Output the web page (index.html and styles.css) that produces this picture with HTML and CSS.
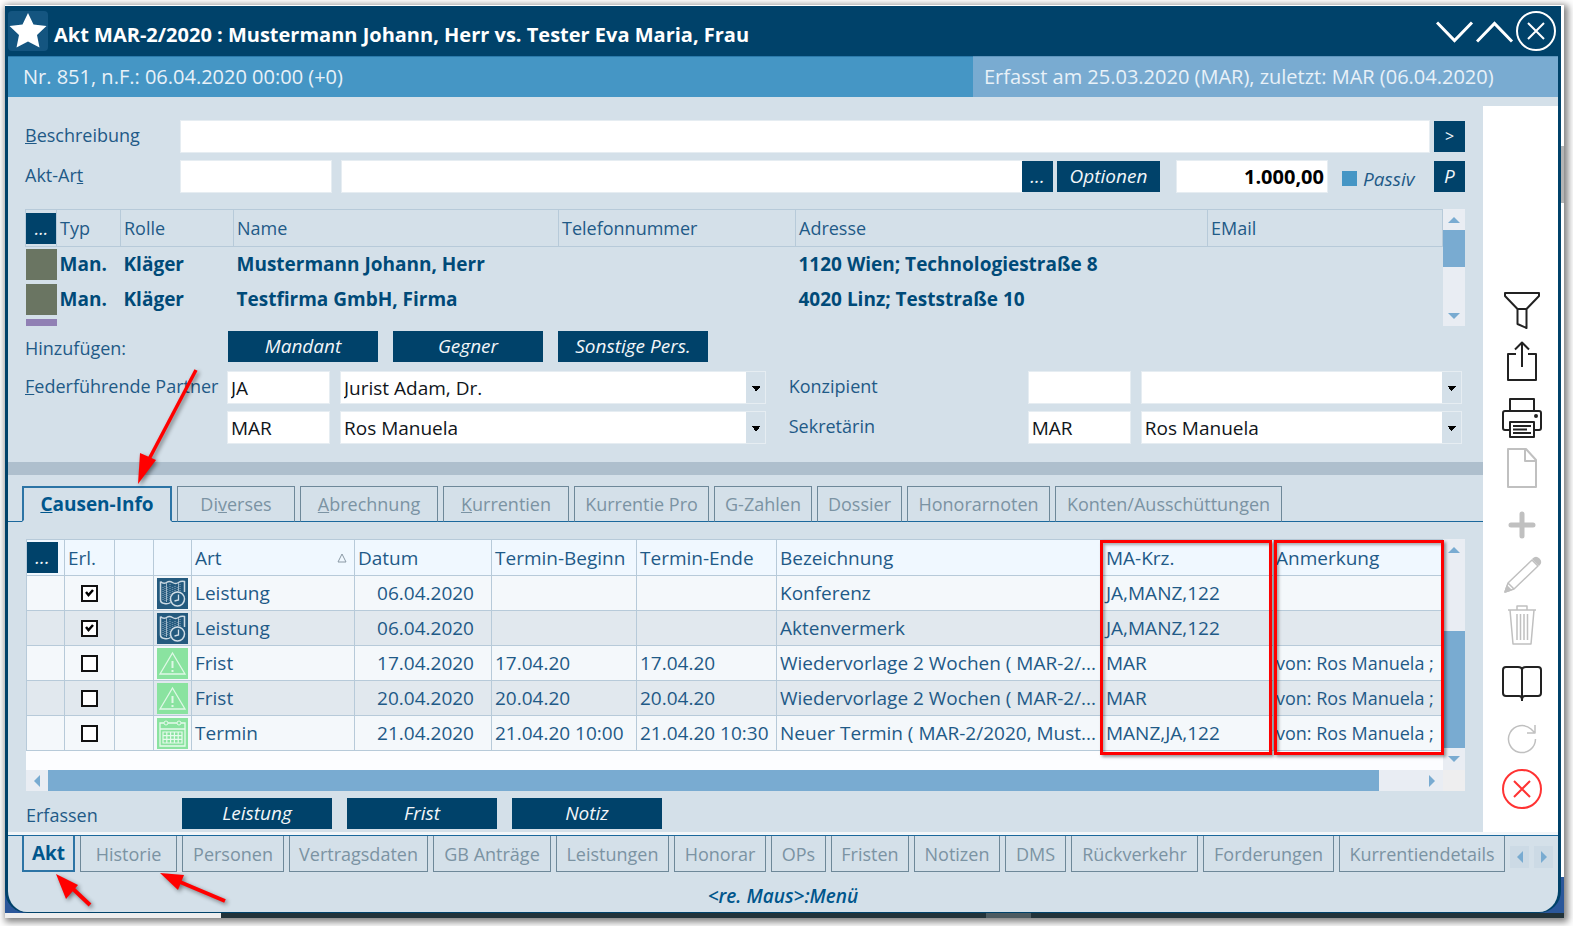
FILE: index.html
```html
<!DOCTYPE html>
<html lang="de">
<head>
<meta charset="utf-8">
<title>Akt MAR-2/2020</title>
<link rel="stylesheet" href="styles.css">
</head>
<body>
<svg class="sprite" width="0" height="0" aria-hidden="true">
  <symbol id="map" viewBox="0 0 31 31">
    <rect width="31" height="31" fill="#245a7e"/>
    <path d="M8 8v16M13 6v18M18 8v8M23 6v8M6 9v13M10.500 9v14M15.500 9v14M20.500 9v5" stroke="#6d90aa" stroke-width="1.500" stroke-dasharray="1 1"/>
    <path d="M3.500 3.500q3 3 6 1t6 0 6 0 6-1V14M3.500 3.500V22q0 3 4 3.500 3 1 6-1" fill="none" stroke="#cbd9e3" stroke-width="1.500"/>
    <path d="M9.500 5v19M21.500 5v8" stroke="#9db6c8" stroke-width="1"/>
    <circle cx="20.500" cy="21" r="7" fill="#245a7e" stroke="#d2dee7" stroke-width="1.500"/>
    <path d="M21.500 16.500v5.500l-4 1" fill="none" stroke="#d2dee7" stroke-width="1.300"/>
  </symbol>
  <symbol id="warn" viewBox="0 0 31 31">
    <rect width="31" height="31" fill="#8ae3a0"/>
    <path d="M15.500 5L28 26H3z" fill="none" stroke="#dff8e6" stroke-width="1.300"/>
    <path d="M15.500 13v7M15.500 22v2" stroke="#dff8e6" stroke-width="2"/>
  </symbol>
  <symbol id="cal" viewBox="0 0 31 31">
    <rect width="31" height="31" fill="#8ae3a0"/>
    <path d="M3 5h25v23H3zM3 11h25" fill="none" stroke="#e6faec" stroke-width="1.300"/>
    <circle cx="9" cy="5" r="2" fill="#8ae3a0" stroke="#e6faec"/><circle cx="22" cy="5" r="2" fill="#8ae3a0" stroke="#e6faec"/>
    <path d="M6 14h19v11H6zM6 17.700h19M6 21.400h19M9.800 14v11M13.600 14v11M17.400 14v11M21.200 14v11" fill="none" stroke="#e6faec" stroke-width="1.200"/>
  </symbol>
</svg>
<div class="screen">
  <div class="backdrop">
  <div class="window">
    <header class="titlebar">
      <svg class="star" viewBox="0 0 40 40" aria-hidden="true"><rect width="40" height="40" rx="4" fill="#145580"/><path d="M20 2l5.500 11.500L38.500 15l-9.500 9 2.500 12.500L20 30.500 8.500 36.500 11 24 1.500 15l13-1.500z" fill="#fff"/></svg>
      <h1>Akt MAR-2/2020 : Mustermann Johann, Herr vs. Tester Eva Maria, Frau</h1>
      <button class="wbtn" aria-label="Weiter"><svg width="40" height="40" viewBox="0 0 40 40"><path d="M1 11.500L18.500 29.500 36 11.500" fill="none" stroke="#fff" stroke-width="3"/></svg></button>
      <button class="wbtn" aria-label="Zurück"><svg width="40" height="40" viewBox="0 0 40 40"><path d="M1 30.500L18.500 12.500 36 30.500" fill="none" stroke="#fff" stroke-width="3"/></svg></button>
      <button class="wbtn" aria-label="Schließen"><svg width="40" height="40" viewBox="0 0 40 40"><circle cx="20" cy="20" r="19" fill="none" stroke="#fff" stroke-width="2"/><path d="M12 12l16 16M28 12L12 28" stroke="#fff" stroke-width="2"/></svg></button>
    </header>
    <div class="subbar"><div class="sub-left">Nr. 851, n.F.: 06.04.2020 00:00 (+0)</div><div class="sub-right">Erfasst am 25.03.2020 (MAR), zuletzt: MAR (06.04.2020)</div></div>
    <div class="body">
      <main class="main">
        <div class="upper">
          <div class="row">
            <label class="lab" for="beschr"><u>B</u>eschreibung</label>
            <input class="field grow" id="beschr" type="text">
            <button class="btn sq up">&gt;</button>
          </div>
          <div class="row second">
            <label class="lab" for="art">Akt-Ar<u>t</u></label>
            <input class="field kind" id="art" type="text">
            <input class="field grow" type="text" aria-label="Akt-Art Text">
            <button class="btn sq">...</button>
            <button class="btn opt">Optionen</button>
            <input class="field amount" type="text" value="1.000,00" aria-label="Betrag">
            <label class="passive"><input type="checkbox">Passiv</label>
            <button class="btn sq">P</button>
          </div>
          <div class="gridbox persons">
            <table>
              <colgroup><col class="p1"><col class="p2"><col class="p3"><col class="p4"><col class="p5"><col><col class="p7"></colgroup>
              <thead><tr><th><button class="btn sq">...</button></th><th>Typ</th><th>Rolle</th><th>Name</th><th>Telefonnummer</th><th>Adresse</th><th>EMail</th></tr></thead>
              <tbody>
                <tr><td><i class="swatch"></i></td><td>Man.</td><td>Kläger</td><td>Mustermann Johann, Herr</td><td></td><td>1120 Wien; Technologiestraße 8</td><td></td></tr>
                <tr><td><i class="swatch"></i></td><td>Man.</td><td>Kläger</td><td>Testfirma GmbH, Firma</td><td></td><td>4020 Linz; Teststraße 10</td><td></td></tr>
                <tr class="cut"><td><i class="swatch violet"></i></td><td></td><td></td><td></td><td></td><td></td><td></td></tr>
              </tbody>
            </table>
            <div class="vscroll"><i class="arr up-arr"></i><i class="thumb"></i><i class="arr down-arr"></i></div>
          </div>
          <div class="row adders">
            <span class="lab wide">Hinzufügen:</span>
            <button class="btn act">Mandant</button><button class="btn act">Gegner</button><button class="btn act">Sonstige Pers.</button>
          </div>
          <div class="row staff">
            <label class="lab wide" for="fp"><u>F</u>ederführende Partner</label>
            <input class="field code" id="fp" type="text" value="JA">
            <select class="field pick4" aria-label="Federführender Partner"><option>Jurist Adam, Dr.</option></select>
            <label class="lab mid" for="kz">Konzipient</label>
            <input class="field code" id="kz" type="text">
            <select class="field pick3" aria-label="Konzipient Name"><option></option></select>
          </div>
          <div class="row staff next">
            <span class="lab wide"></span>
            <input class="field code" type="text" value="MAR" aria-label="Zweiter Partner Kürzel">
            <select class="field pick4" aria-label="Zweiter Partner"><option>Ros Manuela</option></select>
            <label class="lab mid" for="sk">Sekretärin</label>
            <input class="field code" id="sk" type="text" value="MAR">
            <select class="field pick3" aria-label="Sekretärin Name"><option>Ros Manuela</option></select>
          </div>
        </div>
        <div class="splitter"></div>
        <nav class="tabs top">
          <button class="tab on"><u>C</u>ausen-Info</button><button class="tab">Di<u>v</u>erses</button><button class="tab"><u>A</u>brechnung</button><button class="tab"><u>K</u>urrentien</button><button class="tab">Kurrentie Pro</button><button class="tab">G-Zahlen</button><button class="tab">Dossier</button><button class="tab">Honorarnoten</button><button class="tab">Konten/Ausschüttungen</button>
        </nav>
        <div class="lower">
          <div class="gridbox events">
            <div class="sheet">
            <table>
              <colgroup><col class="e1"><col class="e2"><col class="e3"><col class="e4"><col class="e5"><col class="e6"><col class="e7"><col class="e8"><col><col class="e10"><col class="e11"></colgroup>
              <thead><tr><th class="nopad"><button class="btn sq">...</button></th><th>Erl.</th><th></th><th></th><th><span class="sort">Art<svg width="10" height="10" viewBox="0 0 10 10"><path d="M5 1l4 8H1z" fill="none" stroke="#8a99a5"/></svg></span></th><th>Datum</th><th>Termin-Beginn</th><th>Termin-Ende</th><th>Bezeichnung</th><th class="kz">MA-Krz.</th><th class="note">Anmerkung</th></tr></thead>
              <tbody>
                <tr><td></td><td class="chk"><input type="checkbox" checked aria-label="Erledigt"></td><td></td><td class="ico"><svg><use href="#map"/></svg></td><td>Leistung</td><td class="dat">06.04.2020</td><td></td><td></td><td>Konferenz</td><td class="kz">JA,MANZ,122</td><td class="note"></td></tr>
                <tr><td></td><td class="chk"><input type="checkbox" checked aria-label="Erledigt"></td><td></td><td class="ico"><svg><use href="#map"/></svg></td><td>Leistung</td><td class="dat">06.04.2020</td><td></td><td></td><td>Aktenvermerk</td><td class="kz">JA,MANZ,122</td><td class="note"></td></tr>
                <tr><td></td><td class="chk"><input type="checkbox" aria-label="Erledigt"></td><td></td><td class="ico"><svg><use href="#warn"/></svg></td><td>Frist</td><td class="dat">17.04.2020</td><td>17.04.20</td><td>17.04.20</td><td>Wiedervorlage 2 Wochen ( MAR-2/...</td><td class="kz">MAR</td><td class="note">von: Ros Manuela ;</td></tr>
                <tr><td></td><td class="chk"><input type="checkbox" aria-label="Erledigt"></td><td></td><td class="ico"><svg><use href="#warn"/></svg></td><td>Frist</td><td class="dat">20.04.2020</td><td>20.04.20</td><td>20.04.20</td><td>Wiedervorlage 2 Wochen ( MAR-2/...</td><td class="kz">MAR</td><td class="note">von: Ros Manuela ;</td></tr>
                <tr><td></td><td class="chk"><input type="checkbox" aria-label="Erledigt"></td><td></td><td class="ico"><svg><use href="#cal"/></svg></td><td>Termin</td><td class="dat">21.04.2020</td><td>21.04.20 10:00</td><td>21.04.20 10:30</td><td>Neuer Termin ( MAR-2/2020, Must...</td><td class="kz">MANZ,JA,122</td><td class="note">von: Ros Manuela ;</td></tr>
              </tbody>
            </table>
            <div class="mark mark-a"></div><div class="mark mark-b"></div>
            </div>
            <div class="vscroll"><i class="arr up-arr"></i><i class="thumb"></i><i class="arr down-arr"></i></div>
            <div class="hscroll"><i class="arr left-arr"></i><i class="bar"></i><i class="arr right-arr"></i></div>
            <div class="corner"></div>
          </div>
          <div class="row capture">
            <span class="lab">Erfassen</span>
            <button class="btn act">Leistung</button><button class="btn act">Frist</button><button class="btn act">Notiz</button>
          </div>
        </div>
      </main>
      <aside class="tools">
        <div class="group">
          <button aria-label="Filter"><svg viewBox="0 0 40 40"><path d="M3 2h34v3L24.500 18h-9L3 5zM15.500 18v15l9 4V18"/></svg></button>
          <button aria-label="Teilen"><svg viewBox="0 0 40 40"><path d="M14 13H6v26h28V13h-8M20 26V2M13 8.500l7-7 7 7"/></svg></button>
        </div>
        <div class="group">
          <button aria-label="Drucken"><svg viewBox="0 0 40 40"><path d="M8 13V1h24v12M8 32H3q-2 0-2-2V15q0-2 2-2h34q2 0 2 2v15q0 2-2 2h-5M8 24h24v15H8zM11 28h18M11 31.500h14M11 35h18"/><circle cx="34" cy="18" r="1"/></svg></button>
          <button class="off" aria-label="Dokument"><svg viewBox="0 0 40 40"><path d="M6 1h18l10 11v27H6zM23 1v12h11"/></svg></button>
        </div>
        <div class="group">
          <button class="off" aria-label="Neu"><svg viewBox="0 0 40 40"><path class="fat" d="M20 9v22M9 20h22"/></svg></button>
          <button class="off thin" aria-label="Bearbeiten"><svg viewBox="0 0 40 40"><path d="M3 37l3-9L30 5l6 6L12 34zM6 28l6 6"/><path class="solid" d="M3 37l2-6 4 4zM31 4q3-3 6 0t0 6z"/></svg></button>
          <button class="off thin" aria-label="Löschen"><svg viewBox="0 0 40 40"><path d="M6 5h28M15 5V1h10v4M8 5l3 34h18l3-34M15 9v26M18.500 9v26M22 9v26M25.500 9v26"/></svg></button>
        </div>
        <div class="group">
          <button aria-label="Buch"><svg viewBox="0 0 40 40"><path d="M20 6v33M20 8q0-3-4-3H4Q1 5 1 8v23q0 3 3 3h13q3 0 3 4 0-4 3-4h13q3 0 3-3V8q0-3-3-3H24q-4 0-4 3" /></svg></button>
        </div>
        <div class="group">
          <button class="off thin" aria-label="Aktualisieren"><svg viewBox="0 0 40 40"><path d="M33.500 20A13.500 13.500 0 1 1 29 10l3 3M33 6v8h-8"/></svg></button>
          <button class="red" aria-label="Abbrechen"><svg viewBox="0 0 40 40"><circle cx="20" cy="20" r="19"/><path d="M12 12l16 16M28 12L12 28"/></svg></button>
        </div>
      </aside>
    </div>
    <nav class="tabs bottom">
      <button class="tab on">Akt</button><button class="tab">Historie</button><button class="tab">Personen</button><button class="tab">Vertragsdaten</button><button class="tab">GB Anträge</button><button class="tab">Leistungen</button><button class="tab">Honorar</button><button class="tab">OPs</button><button class="tab">Fristen</button><button class="tab">Notizen</button><button class="tab">DMS</button><button class="tab">Rückverkehr</button><button class="tab">Forderungen</button><button class="tab">Kurrentiendetails</button>
      <button class="pager" aria-label="Tabs zurück"><i class="arr left-arr"></i></button><button class="pager" aria-label="Tabs vor"><i class="arr right-arr"></i></button>
    </nav>
    <footer class="status">&lt;re. Maus&gt;:Menü</footer>
  </div>
  </div>
  <div class="taskbar"><i class="light"></i><i class="dark"></i><i class="mid-part"></i><i class="dark rest"></i></div>
  <svg class="pointers" width="240" height="140" viewBox="0 0 240 140" aria-hidden="true">
    <g class="ptr"><path d="M196 11L147 104" stroke="#f00" stroke-width="3.500"/><path d="M138 125l2-31 16 7z" fill="#f00"/></g>
  </svg>
  <svg class="pointers low" width="240" height="50" viewBox="0 0 240 50" aria-hidden="true">
    <g class="ptr"><path d="M90 37L71 19" stroke="#f00" stroke-width="4"/><path d="M56 6l22 11-12 14z" fill="#f00"/></g>
    <g class="ptr"><path d="M225 33L180 14" stroke="#f00" stroke-width="4"/><path d="M160 5l24 2-6 15z" fill="#f00"/></g>
  </svg>
</div>
</body>
</html>
```

FILE: styles.css
```css
* { box-sizing: border-box; }
body { margin: 0; padding: 5px 9px 9px 5px; background: #fff; font: 19px/26px "Open Sans", "Noto Sans", sans-serif; color: #1f5a87; }
button, input, select { font: inherit; margin: 0; padding: 0; border: 0; border-radius: 0; color: inherit; background: none; }
.sprite { position: absolute; }

.screen { position: relative; box-shadow: 2px 2px 7px 2px rgba(0,0,0,.5); }
.backdrop { padding: 1px 3px 0 0; background: linear-gradient(#fff 0 141px, #b5b5b5 141px 198px, #fff 198px 872px, #2b579a 872px); }
.window { background: #d4e0e9; border: solid #00426a; border-width: 0 3px 1px; border-radius: 0 0 22px 22px; overflow: hidden; }
.taskbar { display: flex; height: 5px; }
.light { width: 216px; background: #eee; }
.dark { flex: 764; background: #22333a; }
.mid-part { width: 45px; background: #4d5b61; }
.rest { flex: 533; }

.titlebar { display: flex; align-items: center; height: 50px; background: #00426a; color: #fff; padding-right: 2px; }
.star { width: 40px; height: 40px; flex: none; }
.titlebar h1 { flex: 1; margin: 8px 0 0 6px; font-size: 20px; font-weight: 700; }
.wbtn { width: 40px; height: 40px; }
.wbtn svg { display: block; }
.subbar { display: flex; height: 41px; line-height: 39px; color: #e8f1f8; font-size: 20px; }
.sub-left { flex: 1; background: #4596c5; padding-left: 15px; border-top: 1px solid #2b7aab; }
.sub-right { width: 585px; background: #79abd1; padding-left: 11px; border-top: 1px solid #5f95bd; }

.body { display: flex; border-bottom: 3px solid #f2f6f9; }
.main { flex: 1; min-width: 0; }
.upper { padding: 24px 18px 19px 17px; }
.row { display: flex; align-items: center; }
.lab { flex: none; width: 156px; margin-top: -3px; font-size: 18px; }
.lab.wide { width: 203px; white-space: nowrap; }
.lab.mid { width: 240px; margin-left: 24px; }
.field { height: 31px; background: #fff; color: #10151a; outline: 1px solid #e6edf2; padding: 0 3px; min-width: 0; }
.grow { flex: 1; }
.btn { height: 31px; background: #00426a; color: #f2f6f9; font-style: italic; flex: none; text-align: center; line-height: 29px; }
.sq { width: 31px; }
.row > .sq.up { margin-left: 5px; font-size: 16px; font-style: normal; }
.second { margin-top: 9px; }
.kind { width: 150px; margin-right: 11px; }
.opt { width: 103px; margin: 0 17px 0 4px; }
.amount { width: 150px; text-align: right; font-size: 20px; font-weight: 700; color: #000; }
.passive { display: flex; align-items: center; gap: 6px; margin: 4px 12px 0 15px; width: 80px; font-style: italic; line-height: 24px; }
.passive input { appearance: none; width: 15px; height: 15px; background: #4596c5; }

.gridbox { display: grid; grid-template-columns: minmax(0, 1fr) 22px; }
table { width: 100%; table-layout: fixed; border-collapse: collapse; }
th, td { padding: 0 0 0 3px; text-align: left; font-weight: 400; white-space: nowrap; overflow: hidden; border: 1px solid #b7cad9; }
th { height: 37px; }
th .btn, th svg { display: block; }
.persons { margin-top: 17px; height: 117px; overflow: hidden; }
.persons th { font-size: 18px; }
.persons td { border: 0; font-weight: 700; color: #004a78; height: 35px; }
.persons th:first-child, .persons td:first-child { padding: 0; }
.persons .cut td { height: 10px; vertical-align: top; }
.p1 { width: 31px; } .p2 { width: 64px; } .p3 { width: 113px; } .p4 { width: 325px; } .p5 { width: 237px; } .p7 { width: 235px; }
.swatch { display: block; height: 31px; background: #6a7562; }
.violet { height: 7px; margin-top: 2px; background: #9080b4; }
.vscroll { display: flex; flex-direction: column; align-items: center; background: #e9edf3; padding: 8px 0; }
.vscroll .thumb { width: 100%; background: #79abd1; }
.persons .thumb { height: 37px; margin: 7px 0 auto; }
.arr { flex: none; border: 6px solid transparent; width: 0; height: 0; }
.up-arr { border-top: 0; border-bottom-color: #79abd1; }
.down-arr { border-bottom: 0; border-top-color: #79abd1; }
.left-arr { border-left: 0; border-right-color: #79abd1; }
.right-arr { border-right: 0; border-left-color: #79abd1; }

.adders, .capture { gap: 15px; }
.adders { margin-top: 5px; }
.adders .lab.wide { width: 188px; margin-top: 2px; }
.act { width: 150px; }
.staff { margin-top: 10px; }
.staff.next { margin-top: 9px; }
.code { width: 101px; margin-right: 12px; }
select.field { appearance: none; background: conic-gradient(from 315deg at 50% 100%, #000 90deg, #d4e0e9 0) right 5px top 14px / 9px 5px no-repeat, linear-gradient(90deg, #fff calc(100% - 19px), #d4e0e9 0); }
select.field { background: linear-gradient(45deg, transparent 50%, #000 0) right 9px top 14px / 5px 5px no-repeat, linear-gradient(-45deg, transparent 50%, #000 0) right 4px top 14px / 5px 5px no-repeat, linear-gradient(90deg, #fff calc(100% - 19px), #d4e0e9 0); }
.pick4 { flex: 4 1 0; } .pick3 { flex: 3 1 0; margin-right: 4px; }
.splitter { height: 13px; background: #aebfcd; }

.tabs { display: grid; gap: 5px; }
.tab { height: 36px; border: 1px solid #6e8899; color: #7b93a3; white-space: nowrap; line-height: 32px; font-size: 18px; }
.tab.on { border: 2px solid #2c74a5; color: #00568c; font-size: 19px; font-weight: 700; }
.tabs.top { margin-top: 11px; padding-left: 14px; grid-template-columns: 150px 118px 138px 126px 135px 98px 85px 143px 227px; background: linear-gradient(#1b689c, #1b689c) left bottom / 100% 1px no-repeat; }
.top .tab { border-bottom-color: #1b689c; }
.top .tab.on { border-bottom-color: #d4e0e9; }
.lower { padding: 17px 18px 3px; }
.sheet { position: relative; background: #fcfdff; height: 231px; }
.events tr { background: #f4f8fb; }
.events thead tr { background: #f0f8ff; }
.events tbody tr:nth-child(even) { background: #e1e8ee; }
.events th { height: 36px; }
.events td { height: 35px; }
.events th.nopad { padding: 0; }
.events .chk { text-align: center; padding: 0; }
.chk input { appearance: none; display: block; width: 17px; height: 17px; margin: 0 auto; background: #fff; border: 2px solid #111; }
.chk input:checked { background: #fff url("data:image/svg+xml,%3Csvg xmlns='http://www.w3.org/2000/svg' viewBox='0 0 13 13'%3E%3Cpath d='M3 5l2.500 3L10 3' fill='none' stroke='%23000' stroke-width='2.500'/%3E%3C/svg%3E"); }
.ico svg { display: block; width: 31px; height: 31px; }
.events td.dat { text-align: right; padding-right: 17px; }
.sort { display: flex; align-items: center; justify-content: space-between; padding-right: 7px; }
.e1 { width: 38px; } .e2 { width: 50px; } .e3 { width: 39px; } .e4 { width: 38px; } .e5 { width: 163px; } .e6 { width: 137px; } .e7 { width: 145px; } .e8 { width: 140px; } .e10 { width: 172px; } .e11 { width: 169px; }
.events .kz { padding-left: 4px; }
.events .note { padding-left: 2px; }
.events td.note { font-size: 18px; }
.mark { position: absolute; top: 1px; height: 215px; border: 3px solid #f00; box-shadow: 2px 2px 3px rgba(0,0,0,.4), inset 2px 2px 3px rgba(0,0,0,.3); }
.mark-a { right: 171px; width: 172px; }
.mark-b { right: -1px; width: 170px; }
.events .thumb { height: 117px; margin-top: auto; }
.events .vscroll .down-arr { margin-top: 8px; }
.hscroll { display: flex; align-items: center; height: 21px; background: #e9edf3; padding: 0 8px; }
.bar { flex: 1; align-self: stretch; margin: 0 50px 0 8px; background: #79abd1; }
.corner { background: #eeeeef; }
.capture { margin-top: 7px; }
.capture .lab { width: 141px; margin-top: 3px; }

.tools { width: 75px; background: #fff; margin-top: 9px; display: flex; flex-direction: column; justify-content: flex-end; align-items: center; gap: 17px; padding: 0 0 23px 2px; }
.group { display: flex; flex-direction: column; gap: 10px; }
.tools button { width: 40px; height: 40px; }
.tools svg { display: block; width: 40px; height: 40px; fill: none; stroke: #222; stroke-width: 2; stroke-linejoin: round; }
.tools .off svg { stroke: #c0c0c0; }
.tools .thin svg { stroke-width: 1.500; }
.tools .fat { stroke-width: 5; stroke-linecap: round; }
.tools .solid { fill: #c0c0c0; }
.tools .red svg { stroke: #f33; }

.tabs.bottom { border-top: 1px solid #1b689c; padding-left: 14px; grid-template-columns: 53px 97px 102px 139px 118px 113px 92px 55px 78px 86px 61px 127px 131px 166px 19px 19px; column-gap: 5px; }
.bottom .tab { border-top: 0; line-height: 34px; }
.pager { height: 22px; margin-top: 10px; background: #ccdae5; display: flex; align-items: center; justify-content: center; }
.status { text-align: center; font-weight: 600; font-style: italic; color: #00568c; height: 40px; padding-top: 11px; }

.pointers { position: absolute; left: -5px; top: 354px; pointer-events: none; }
.pointers.low { top: 863px; }
.ptr { filter: drop-shadow(2px 2px 2px rgba(0,0,0,.45)); }
```
